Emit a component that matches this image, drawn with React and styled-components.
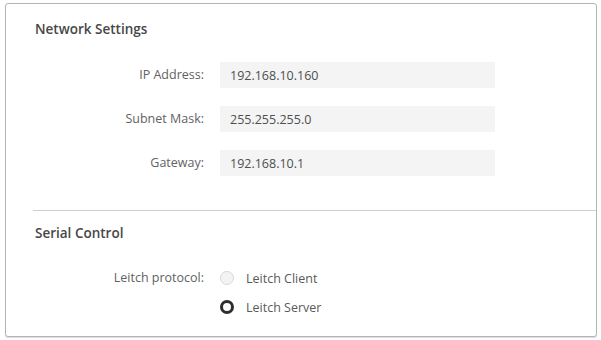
import styled, { createGlobalStyle } from "styled-components"

const Global = createGlobalStyle`
  html, body {
    margin: 0;
    padding: 0;
    background: #ffffff;
    font-family: "Open Sans", "Liberation Sans", sans-serif;
  }
`

const Page = styled.div`
  width: 601px;
  height: 340px;
  box-sizing: border-box;
  padding: 3px 4px 3px 5px;
`

const Panel = styled.div`
  height: 100%;
  box-sizing: border-box;
  border: 1px solid #b4b4b4;
  border-radius: 3px;
  box-shadow: 0 1px 1px rgba(0, 0, 0, 0.15);
  background: #fff;
  display: flex;
  flex-direction: column;
`

const Section = styled.div`
  padding: ${p => p.$top}px 0 0 29px;
  display: flex;
  flex-direction: column;
`

const Heading = styled.h2`
  margin: 0;
  font-size: 13.5px;
  line-height: 16px;
  font-weight: 600;
  color: #474747;
`

const Rows = styled.div`
  display: flex;
  flex-direction: column;
  gap: ${p => p.$gap}px;
  margin-top: ${p => p.$top}px;
`

const Row = styled.div`
  display: flex;
  align-items: ${p => (p.$top ? "flex-start" : "center")};
`

const Label = styled.div`
  width: 169px;
  text-align: right;
  font-size: 12.5px;
  line-height: 14px;
  color: #626262;
  padding-right: 16px;
  flex-shrink: 0;
`

const Field = styled.div`
  width: 275px;
  height: 26px;
  box-sizing: border-box;
  padding-left: 10px;
  background: #f4f4f4;
  display: flex;
  align-items: center;
  font-size: 12.5px;
  color: #4e4e4e;
`

const Divider = styled.hr`
  margin: 34px 0 0 27px;
  border: none;
  border-top: 1px solid #cfcfcf;
`

const RadioGroup = styled.div`
  display: flex;
  flex-direction: column;
  gap: 15px;
`

const RadioItem = styled.label`
  display: flex;
  align-items: center;
  gap: 12px;
  font-size: 12.5px;
  color: #5a5a5a;
  height: 14px;
`

const Dot = styled.span`
  width: 14px;
  height: 14px;
  box-sizing: border-box;
  border-radius: 50%;
  border: ${p => (p.$on ? "3px solid #2e2e2e" : "1px solid #d8d8d8")};
  background: ${p => (p.$on ? "#fff" : "#f3f3f3")};
  flex-shrink: 0;
`

const network = [
  ["IP Address:", "192.168.10.160"],
  ["Subnet Mask:", "255.255.255.0"],
  ["Gateway:", "192.168.10.1"],
]

export default function App() {
  return (
    <>
      <Global />
      <Page>
        <Panel>
          <Section $top={17}>
            <Heading>Network Settings</Heading>
            <Rows $gap={18} $top={25}>
              {network.map(([label, value]) => (
                <Row key={label}>
                  <Label>{label}</Label>
                  <Field>{value}</Field>
                </Row>
              ))}
            </Rows>
          </Section>
          <Divider />
          <Section $top={14}>
            <Heading>Serial Control</Heading>
            <Rows $gap={0} $top={30}>
              <Row $top>
                <Label>Leitch protocol:</Label>
                <RadioGroup>
                  <RadioItem>
                    <Dot />
                    Leitch Client
                  </RadioItem>
                  <RadioItem>
                    <Dot $on />
                    Leitch Server
                  </RadioItem>
                </RadioGroup>
              </Row>
            </Rows>
          </Section>
        </Panel>
      </Page>
    </>
  )
}
